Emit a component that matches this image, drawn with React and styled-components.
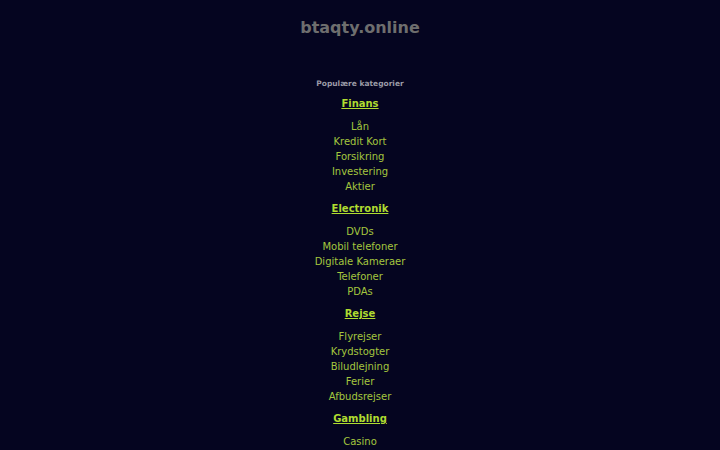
import React from "react";
import styled, { createGlobalStyle } from "styled-components";

const GlobalStyle = createGlobalStyle`
  html, body {
    margin: 0;
    padding: 0;
    background: #050520;
    overflow: hidden;
  }
  body {
    font-family: "DejaVu Sans", "Liberation Sans", sans-serif;
  }
`;

const categories = [
  { title: "Finans", links: ["Lån", "Kredit Kort", "Forsikring", "Investering", "Aktier"] },
  { title: "Electronik", links: ["DVDs", "Mobil telefoner", "Digitale Kameraer", "Telefoner", "PDAs"] },
  { title: "Rejse", links: ["Flyrejser", "Krydstogter", "Biludlejning", "Ferier", "Afbudsrejser"] },
  { title: "Gambling", links: ["Casino"] },
];

function App() {
  return (
    <Page>
      <GlobalStyle />
      <Domain>btaqty.online</Domain>
      <Popular>Populære kategorier</Popular>
      <Categories>
        {categories.map((cat) => (
          <Block key={cat.title}>
            <Heading href="#">{cat.title}</Heading>
            <LinkList>
              {cat.links.map((l) => (
                <Item key={l}>
                  <Link href="#">{l}</Link>
                </Item>
              ))}
            </LinkList>
          </Block>
        ))}
      </Categories>
    </Page>
  );
}

export default App;

const Page = styled.div`
  display: flex;
  flex-direction: column;
  align-items: center;
  padding-top: 18px;
  text-align: center;
`;

const Domain = styled.h1`
  margin: 0;
  font-size: 16px;
  line-height: 20px;
  font-weight: bold;
  color: #6e6e6e;
`;

const Popular = styled.div`
  margin-top: 40px;
  font-size: 7.5px;
  line-height: 12px;
  font-weight: bold;
  color: #9a9aa6;
`;

const Categories = styled.div`
  display: flex;
  flex-direction: column;
  align-items: center;
  padding-top: 6px;
`;

const Block = styled.div`
  display: flex;
  flex-direction: column;
  align-items: center;
  & + & {
    padding-top: 7px;
  }
`;

const Heading = styled.a`
  font-size: 10px;
  line-height: 15px;
  font-weight: bold;
  color: #b0dc30;
  text-decoration: underline;
  margin-bottom: 8px;
`;

const LinkList = styled.ul`
  list-style: none;
  margin: 0;
  padding: 0;
`;

const Item = styled.li`
  font-size: 10px;
  line-height: 15px;
`;

const Link = styled.a`
  color: #a4c63e;
  text-decoration: none;
`;
